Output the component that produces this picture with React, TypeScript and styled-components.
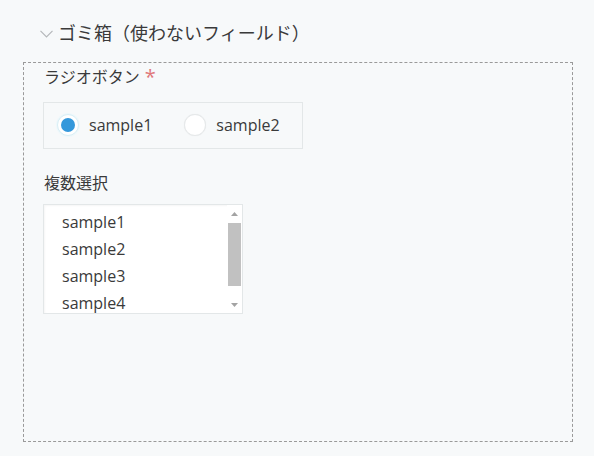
import React from "react";
import styled, { createGlobalStyle } from "styled-components";

const GlobalStyle = createGlobalStyle`
  html, body {
    margin: 0;
    padding: 0;
    background: #f7f9fa;
  }
  body {
    font-family: "Open Sans", "Noto Sans CJK JP", sans-serif;
    color: #3a3a3a;
  }
`;

const Page = styled.div`
  width: 594px;
  height: 456px;
  box-sizing: border-box;
  padding: 19px 21px 0 23px;
  background: #f7f9fa;
`;

const GroupHeader = styled.div`
  display: flex;
  align-items: center;
  height: 28px;
  padding-left: 17px;
  gap: 5px;
  font-size: 18px;
  line-height: 28px;
  color: #3a3a3a;
`;

const Chevron = styled.svg`
  width: 13px;
  height: 8px;
  flex: none;
  margin-top: 2px;
`;

const GroupBody = styled.div`
  margin-top: 15px;
  height: 380px;
  box-sizing: border-box;
  border: 1px dashed #9a9a9a;
  padding: 1px 19px 0;
  display: flex;
  flex-direction: column;
  align-items: flex-start;
`;

const FieldLabel = styled.div<{ $gap: number }>`
  margin-top: ${(p) => p.$gap}px;
  font-size: 16px;
  line-height: 24px;
  padding-left: 1px;
  color: #3a3a3a;
  display: flex;
  align-items: center;
`;

const Required = styled.span`
  color: #e0787a;
  font-size: 20px;
  line-height: 20px;
  margin-left: 5px;
`;

const RadioGroup = styled.div`
  margin-top: 13px;
  height: 47px;
  box-sizing: border-box;
  border: 1px solid #e3e7e8;
  display: flex;
  align-items: center;
  padding: 0 22px 2px 13px;
  gap: 32px;
`;

const RadioOption = styled.label`
  display: flex;
  align-items: center;
  gap: 10px;
  font-size: 16px;
  color: #3a3a3a;
  cursor: pointer;
`;

const RadioMark = styled.span<{ $checked: boolean }>`
  width: 22px;
  height: 22px;
  box-sizing: border-box;
  border-radius: 50%;
  background: #fff;
  border: 1px solid ${(p) => (p.$checked ? "#d8eef5" : "#e6e9ea")};
  box-shadow: ${(p) => (p.$checked ? "0 0 0 1px #eef8fb" : "0 0 1px rgba(0,0,0,0.08)")};
  display: flex;
  align-items: center;
  justify-content: center;

  &::after {
    content: "";
    display: ${(p) => (p.$checked ? "block" : "none")};
    width: 14px;
    height: 14px;
    border-radius: 50%;
    background: #3498db;
  }
`;

const ListBox = styled.div`
  margin-top: 9px;
  width: 200px;
  height: 110px;
  box-sizing: border-box;
  border: 1px solid #e3e7e8;
  background: #fff;
  box-shadow: inset 1px 1px 2px rgba(0, 0, 0, 0.04);
  display: grid;
  grid-template-columns: 1fr 15px;
  overflow: hidden;
`;

const ListItems = styled.ul`
  list-style: none;
  margin: 0;
  padding: 4px 0 0 18px;
  overflow: hidden;
`;

const ListItem = styled.li`
  font-size: 16px;
  line-height: 27px;
  color: #3a3a3a;
  white-space: nowrap;
`;

const ScrollBar = styled.div`
  display: flex;
  flex-direction: column;
  background: #fff;
`;

const ScrollButton = styled.div`
  height: 17px;
  display: flex;
  align-items: center;
  justify-content: center;
`;

const ScrollTrack = styled.div`
  flex: 1;
  display: flex;
  flex-direction: column;
  padding-top: 1px;
`;

const ScrollThumb = styled.div`
  height: 63px;
  margin: 0 1px;
  background: #c1c1c1;
`;

const Arrow = ({ down }: { down?: boolean }) => (
  <svg width="7" height="4" viewBox="0 0 7 4">
    <path d={down ? "M0 0 H7 L3.5 4 Z" : "M0 4 H7 L3.5 0 Z"} fill="#a3a3a3" />
  </svg>
);

const options = ["sample1", "sample2"];
const items = ["sample1", "sample2", "sample3", "sample4"];

export default function App() {
  return (
    <>
      <GlobalStyle />
      <Page>
        <GroupHeader>
          <Chevron viewBox="0 0 13 8">
            <path d="M0.5 0.8 L6.5 6.8 L12.5 0.8" fill="none" stroke="#b5b8ba" strokeWidth="1.2" />
          </Chevron>
          <span>ゴミ箱（使わないフィールド）</span>
        </GroupHeader>
        <GroupBody>
          <FieldLabel $gap={1}>
            ラジオボタン<Required>*</Required>
          </FieldLabel>
          <RadioGroup>
            {options.map((o, i) => (
              <RadioOption key={o}>
                <RadioMark $checked={i === 0} />
                {o}
              </RadioOption>
            ))}
          </RadioGroup>
          <FieldLabel $gap={22}>複数選択</FieldLabel>
          <ListBox>
            <ListItems>
              {items.map((it) => (
                <ListItem key={it}>{it}</ListItem>
              ))}
            </ListItems>
            <ScrollBar>
              <ScrollButton>
                <Arrow />
              </ScrollButton>
              <ScrollTrack>
                <ScrollThumb />
              </ScrollTrack>
              <ScrollButton>
                <Arrow down />
              </ScrollButton>
            </ScrollBar>
          </ListBox>
        </GroupBody>
      </Page>
    </>
  );
}
